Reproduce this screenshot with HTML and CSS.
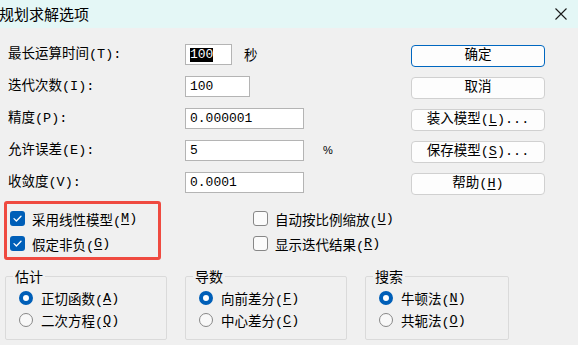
FILE: index.html
```html
<!DOCTYPE html>
<html lang="zh-CN">
<head>
<meta charset="utf-8">
<title>规划求解选项</title>
<link rel="stylesheet" href="styles.css">
</head>
<body>
<div class="window">
  <div class="titlebar">
    <span class="title">规划求解选项</span>
    <svg class="close" width="12" height="12" viewBox="0 0 12 12"><path d="M0.5 0.5 L11.5 11.5 M11.5 0.5 L0.5 11.5" stroke="#1a1a1a" stroke-width="1.1" fill="none"/></svg>
  </div>

  <div class="top">
    <div class="fields">
      <div class="label">最长运算时间(T):</div>
      <div class="field"><div class="input w46"><span class="sel">100</span></div><span class="suffix s-sec">秒</span></div>
      <div class="label">迭代次数(I):</div>
      <div class="field"><div class="input w64">100</div></div>
      <div class="label">精度(P):</div>
      <div class="field"><div class="input w118">0.000001</div></div>
      <div class="label">允许误差(E):</div>
      <div class="field"><div class="input w118">5</div><span class="suffix s-pct">%</span></div>
      <div class="label">收敛度(V):</div>
      <div class="field"><div class="input w118">0.0001</div></div>
    </div>
    <div class="buttons">
      <div class="btn primary">确定</div>
      <div class="btn">取消</div>
      <div class="btn">装入模型(<u>L</u>)...</div>
      <div class="btn">保存模型(<u>S</u>)...</div>
      <div class="btn">帮助(<u>H</u>)</div>
    </div>
  </div>

  <div class="checks">
    <div class="checkcol highlight">
      <div class="check"><span class="box on"><svg width="15" height="15" viewBox="0 0 15 15"><path d="M4 7.6 L6.4 10 L11 5.2" stroke="#fff" stroke-width="1.3" fill="none" stroke-linecap="round" stroke-linejoin="round"/></svg></span>采用线性模型(<u>M</u>)</div>
      <div class="check"><span class="box on"><svg width="15" height="15" viewBox="0 0 15 15"><path d="M4 7.6 L6.4 10 L11 5.2" stroke="#fff" stroke-width="1.3" fill="none" stroke-linecap="round" stroke-linejoin="round"/></svg></span>假定非负(<u>G</u>)</div>
    </div>
    <div class="checkcol right">
      <div class="check"><span class="box"></span>自动按比例缩放(<u>U</u>)</div>
      <div class="check"><span class="box"></span>显示迭代结果(<u>R</u>)</div>
    </div>
  </div>

  <div class="groups">
    <fieldset class="group g1">
      <legend>估计</legend>
      <div class="radio"><span class="dot on"></span>正切函数(<u>A</u>)</div>
      <div class="radio"><span class="dot"></span>二次方程(<u>Q</u>)</div>
    </fieldset>
    <fieldset class="group g2">
      <legend>导数</legend>
      <div class="radio"><span class="dot on"></span>向前差分(<u>F</u>)</div>
      <div class="radio"><span class="dot"></span>中心差分(<u>C</u>)</div>
    </fieldset>
    <fieldset class="group g3">
      <legend>搜索</legend>
      <div class="radio"><span class="dot on"></span>牛顿法(<u>N</u>)</div>
      <div class="radio"><span class="dot"></span>共轭法(<u>O</u>)</div>
    </fieldset>
  </div>
</div>
</body>
</html>
```

FILE: styles.css
```css
* { box-sizing: border-box; }
html, body { margin: 0; padding: 0; }
body {
  width: 578px;
  height: 345px;
  overflow: hidden;
  background: #f0f0f0;
  font-family: "Liberation Mono", "Noto Sans CJK SC", monospace;
  font-size: 13.5px;
  color: #000;
}
u { text-decoration: underline; text-underline-offset: 2px; }

.titlebar {
  height: 28px;
  background: #e4f7f6;
  display: flex;
  align-items: center;
  justify-content: space-between;
}
.title {
  font-family: "Noto Sans CJK SC", sans-serif;
  font-size: 15px;
  margin-left: -1px;
  line-height: 20px;
}
.close { margin-right: 11px; }

.top {
  display: flex;
  padding: 16px 0 0 8px;
}
.fields {
  display: grid;
  grid-template-columns: 177px 226px;
  grid-auto-rows: 22px;
  row-gap: 10px;
}
.label {
  display: flex;
  align-items: center;
  line-height: 18px;
  white-space: nowrap;
}
.field {
  display: flex;
  align-items: flex-start;
}
.input {
  height: 21px;
  border: 1px solid #b4b4b4;
  background: #fff;
  font-family: "Liberation Mono", monospace;
  font-size: 13px;
  line-height: 19px;
  padding-left: 4px;
  white-space: pre;
}
.w46 { width: 47px; }
.w64 { width: 65px; }
.w118 { width: 119px; }
.sel { background: #000; color: #fff; display: inline-block; line-height: 14px; }
.suffix { line-height: 20px; }
.s-sec { margin-left: 12px; font-family: "Noto Sans CJK SC", sans-serif; }
.s-pct { margin-left: 19px; font-family: "Liberation Sans", sans-serif; font-size: 11px; }

.buttons {
  display: flex;
  flex-direction: column;
  gap: 10px;
  margin-top: 1px;
}
.btn {
  width: 134px;
  height: 22px;
  border: 1px solid #d0d0d0;
  border-radius: 4px;
  background: #fdfdfd;
  display: flex;
  align-items: center;
  justify-content: center;
  line-height: 18px;
  white-space: pre;
}
.btn.primary { border-color: #0067c0; }

.checks {
  display: flex;
  margin-top: 6px;
  padding-left: 4px;
}
.checkcol {
  display: flex;
  flex-direction: column;
}
.highlight {
  width: 157px;
  height: 59px;
  border: 3px solid #ef4a40;
  border-radius: 3px;
  padding: 2px 0 0 3px;
}
.right {
  margin-left: 92px;
  padding-top: 5px;
}
.check {
  height: 25px;
  display: flex;
  align-items: center;
  white-space: nowrap;
}
.box {
  width: 15px;
  height: 15px;
  border: 1px solid #878787;
  border-radius: 3px;
  background: #fbfbfb;
  margin-right: 7px;
  flex: none;
  display: flex;
}
.box.on {
  border: none;
  background: #005fb8;
}

.groups {
  display: flex;
  gap: 18px;
  padding-left: 5px;
  margin-top: 8px;
}
.group {
  margin: 0;
  min-width: 0;
  height: 72px;
  border: 1px solid #dadada;
  border-radius: 2px;
  padding: 3px 0 0 13px;
}
.g1, .g2 { width: 162px; }
.g3 { width: 144px; }
.group legend {
  padding: 0 2px;
  margin-left: -6px;
  line-height: 16px;
  font-size: 14px;
  font-family: "Noto Sans CJK SC", sans-serif;
}
.radio {
  height: 22px;
  display: flex;
  align-items: center;
  white-space: nowrap;
}
.dot {
  width: 14px;
  height: 14px;
  border-radius: 50%;
  border: 1px solid #878787;
  background: #f8f8f8;
  margin-right: 8px;
  flex: none;
}
.dot.on {
  border: 4px solid #005fb8;
  background: #fff;
}
```
